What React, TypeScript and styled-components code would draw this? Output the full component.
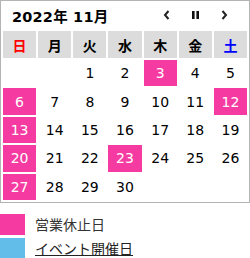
import React from 'react'
import styled, { createGlobalStyle } from 'styled-components'

const GlobalStyle = createGlobalStyle`
	html, body {
		margin: 0;
		padding: 0;
		background: #fff;
		font-family: "DejaVu Sans", "Noto Sans CJK JP", sans-serif;
	}
`

const PINK = '#f53ba1'
const BLUE = '#63bde9'

const Wrap = styled.div`
	width: 250px;
`

const CalendarBox = styled.div`
	box-sizing: border-box;
	width: 250px;
	border: 1px solid #b4b4b4;
`

const TitleBar = styled.div`
	height: 28px;
	display: flex;
	align-items: center;
	justify-content: space-between;
	padding: 0 21px 0 11px;
`

const Title = styled.div`
	font-size: 14.5px;
	font-weight: bold;
	color: #000;
	letter-spacing: 0.2px;
`

const Nav = styled.div`
	display: flex;
	align-items: center;
	gap: 21px;
`

const NavButton = styled.button`
	border: 0;
	background: none;
	padding: 0;
	width: 8px;
	height: 10px;
	display: flex;
	align-items: center;
	justify-content: center;
	cursor: pointer;
`

const Table = styled.table`
	width: 100%;
	border-collapse: separate;
	border-spacing: 2px;
	table-layout: fixed;
`

const HeadCell = styled.th<{ $tone?: 'sun' | 'sat' }>`
	height: 27px;
	padding: 0;
	background: #dcdcdc;
	font-family: "Noto Sans CJK JP", sans-serif;
	font-size: 14px;
	font-weight: bold;
	color: ${(p) => (p.$tone === 'sun' ? '#f00' : p.$tone === 'sat' ? '#00f' : '#000')};
`

const DayCell = styled.td<{ $off?: boolean }>`
	height: 26.4px;
	padding: 0;
	text-align: center;
	font-size: 14px;
	color: ${(p) => (p.$off ? '#fff' : '#000')};
	background: ${(p) => (p.$off ? PINK : 'transparent')};
`

const Legend = styled.div`
	margin-top: 11px;
	display: flex;
	flex-direction: column;
	gap: 3px;
`

const LegendRow = styled.div`
	display: flex;
	align-items: center;
	gap: 10px;
	height: 21px;
`

const Swatch = styled.span<{ $color: string }>`
	width: 25px;
	height: 21px;
	background: ${(p) => p.$color};
`

const LegendText = styled.span`
	font-family: "Noto Sans CJK JP", sans-serif;
	font-size: 14px;
	color: #333;
`

const LegendLink = styled.a`
	font-family: "Noto Sans CJK JP", sans-serif;
	font-size: 14px;
	color: #222;
	text-decoration: underline;
`

const weekdays: { label: string; tone?: 'sun' | 'sat' }[] = [
	{ label: '日', tone: 'sun' },
	{ label: '月' },
	{ label: '火' },
	{ label: '水' },
	{ label: '木' },
	{ label: '金' },
	{ label: '土', tone: 'sat' },
]

const closed = [3, 6, 12, 13, 20, 23, 27]

// november 2022 starts on a tuesday
const buildWeeks = () => {
	const cells: (number | null)[] = [null, null]
	for (let d = 1; d <= 30; d++) cells.push(d)
	while (cells.length % 7) cells.push(null)
	const weeks: (number | null)[][] = []
	for (let i = 0; i < cells.length; i += 7) weeks.push(cells.slice(i, i + 7))
	return weeks
}

export default function App() {
	const weeks = buildWeeks()

	return (
		<Wrap>
			<GlobalStyle />
			<CalendarBox>
				<TitleBar>
					<Title>2022年 11月</Title>
					<Nav>
						<NavButton aria-label="前月">
							<svg width="7" height="10" viewBox="0 0 7 10">
								<path d="M5.5 1 L2 5 L5.5 9" fill="none" stroke="#222" strokeWidth="2" />
							</svg>
						</NavButton>
						<NavButton aria-label="一時停止">
							<svg width="7" height="8" viewBox="0 0 7 8">
								<rect x="0" y="0" width="2.6" height="8" fill="#111" />
								<rect x="4.4" y="0" width="2.6" height="8" fill="#111" />
							</svg>
						</NavButton>
						<NavButton aria-label="次月">
							<svg width="7" height="10" viewBox="0 0 7 10">
								<path d="M1.5 1 L5 5 L1.5 9" fill="none" stroke="#222" strokeWidth="2" />
							</svg>
						</NavButton>
					</Nav>
				</TitleBar>
				<Table>
					<thead>
						<tr>
							{weekdays.map((w) => (
								<HeadCell key={w.label} $tone={w.tone}>
									{w.label}
								</HeadCell>
							))}
						</tr>
					</thead>
					<tbody>
						{weeks.map((week, i) => (
							<tr key={i}>
								{week.map((d, j) => (
									<DayCell key={j} $off={d !== null && closed.includes(d)}>
										{d ?? ''}
									</DayCell>
								))}
							</tr>
						))}
					</tbody>
				</Table>
			</CalendarBox>
			<Legend>
				<LegendRow>
					<Swatch $color={PINK} />
					<LegendText>営業休止日</LegendText>
				</LegendRow>
				<LegendRow>
					<Swatch $color={BLUE} />
					<LegendLink href="#">イベント開催日</LegendLink>
				</LegendRow>
			</Legend>
		</Wrap>
	)
}
